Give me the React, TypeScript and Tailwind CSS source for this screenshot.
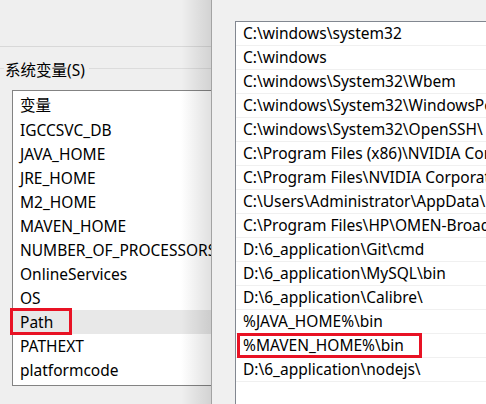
const systemVars = [
  "IGCCSVC_DB",
  "JAVA_HOME",
  "JRE_HOME",
  "M2_HOME",
  "MAVEN_HOME",
  "NUMBER_OF_PROCESSORS",
  "OnlineServices",
  "OS",
  "Path",
  "PATHEXT",
  "platformcode",
];

const pathEntries = [
  "C:\\windows\\system32",
  "C:\\windows",
  "C:\\windows\\System32\\Wbem",
  "C:\\windows\\System32\\WindowsPowerShell\\v1.0\\",
  "C:\\windows\\System32\\OpenSSH\\",
  "C:\\Program Files (x86)\\NVIDIA Corporation\\PhysX\\Common",
  "C:\\Program Files\\NVIDIA Corporation\\NVIDIA NvDLISR",
  "C:\\Users\\Administrator\\AppData\\Local\\Microsoft\\WindowsApps",
  "C:\\Program Files\\HP\\OMEN-Broadcast\\Common",
  "D:\\6_application\\Git\\cmd",
  "D:\\6_application\\MySQL\\bin",
  "D:\\6_application\\Calibre\\",
  "%JAVA_HOME%\\bin",
  "%MAVEN_HOME%\\bin",
  "D:\\6_application\\nodejs\\",
];

const App = () => {
  return (
    <div
      className="w-[486px] h-[404px] flex bg-[#f0f0f0] text-[15.5px] text-black overflow-hidden"
      style={{ fontFamily: '"Noto Sans", "Noto Sans CJK SC", sans-serif' }}
    >
      {/**Environment variables window (behind) */}
      <div className="w-[211px] shrink-0 relative overflow-hidden bg-[#efefef]">
        <div className="h-[47px] border-b border-[#d8d8d8]" />

        {/**Group title */}
        <div className="flex items-center mt-[12px] h-[22px]">
          <div className="w-[4px] h-px bg-[#dcdcdc] -mt-[3px]" />
          <span className="px-[1px] leading-[22px] whitespace-nowrap">系统变量(S)</span>
          <div className="flex-1 h-px bg-[#dcdcdc] -mt-[3px] ml-[3px]" />
        </div>

        {/**Variable list */}
        <div className="ml-[12px] mt-[9px] w-[230px] h-[296px] border border-[#838383] bg-white">
          <div className="h-[27px] pl-[7px] pt-[2px] leading-[24px] whitespace-nowrap">变量</div>
          {systemVars.map((v) => (
            <div
              key={v}
              className={`relative h-[24px] pl-[7px] leading-[24px] whitespace-nowrap ${
                v === "Path" ? "bg-[#e8e8e8]" : ""
              }`}
            >
              {v}
              {v === "Path" && (
                <div className="absolute left-[-3px] top-[-2px] w-[62px] h-[27px] border-[3px] border-[#e81224]" />
              )}
            </div>
          ))}
        </div>

        {/**Shadow cast by the edit dialog */}
        <div className="absolute top-0 right-0 w-[30px] h-full bg-gradient-to-r from-transparent to-black/[0.12] pointer-events-none" />
      </div>

      {/**Edit environment variable dialog */}
      <div className="flex-1 border-l border-[#a3a3a3] bg-[#f0f0f0] pl-[23px] pt-[21px]">
        <div className="h-[383px] border-t border-l border-[#828790] bg-white">
          {pathEntries.map((p, i) => (
            <div
              key={p}
              className="relative h-[24px] border-b border-[#f0f0f0] pl-[7px] leading-[23px] whitespace-nowrap"
            >
              {p}
              {i === 13 && (
                <div className="absolute left-[1px] top-[-1px] w-[185px] h-[25px] border-[3px] border-[#e81224]" />
              )}
            </div>
          ))}
        </div>
      </div>
    </div>
  );
};

export default App;
